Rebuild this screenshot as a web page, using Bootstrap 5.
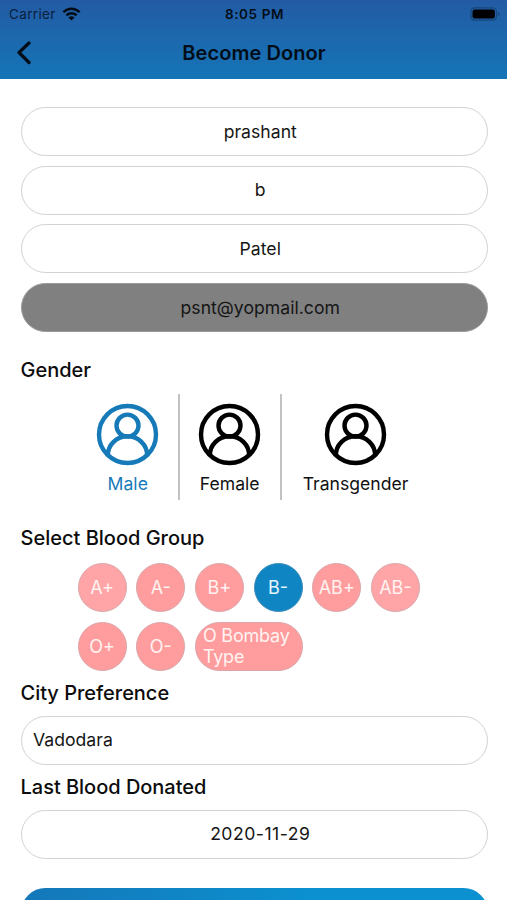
<!DOCTYPE html>
<html lang="en">
<head>
<meta charset="utf-8">
<meta name="viewport" content="width=device-width, initial-scale=1">
<title>Become Donor</title>
<link rel="stylesheet" href="https://cdn.jsdelivr.net/npm/bootstrap@5.3.0/dist/css/bootstrap.min.css">
<style>
  body { font-family: Inter, "Liberation Sans", sans-serif; color: #111; height: 900px; overflow: hidden; background: #fff; }
  .app-header { height: 79px; background: linear-gradient(#235ba4, #1575b7); color: #030d18; }
  .status-bar { height: 27px; font-size: 13.5px; padding: 1px 7px 0 9px; }
  .status-side { flex: 1 1 0; }
  .carrier { letter-spacing: .35px; color: #08203d; }
  .clock { font-size: 13.5px; font-weight: 600; letter-spacing: .6px; }
  .wifi { margin-left: 6px; }
  .title-bar { height: 52px; padding: 0 17px; }
  .title-bar h1 { font-size: 20px; font-weight: 600; letter-spacing: .05px; padding-right: 13px; }
  .donor-form { padding: 28px 19.5px 0 20.5px; }
  .field { height: 49px; font-size: 17.6px; line-height: 1; border: 1.3px solid #d2d2d2; color: #151515; background: #fff; padding: 0 11.5px; letter-spacing: .03px; }
  .fields { gap: 9.7px; }
  .field-locked { background: #808080; border-color: #999; }
  .date { letter-spacing: .5px; }
  .section-title { font-size: 20px; font-weight: 500; line-height: 24px; margin: 0; color: #0c0c0c; }
  .title-spaced { margin-top: 26px; }
  .title-tight { margin-top: 10.500px; letter-spacing: -.02px; }
  .title-tight + .field { margin-top: 10.500px; }
  .gender-row { height: 106px; margin-top: 12px; padding-left: 56px; }
  .gender-option { font-size: 17.6px; line-height: 20px; padding-top: 9px; gap: 7.5px; }
  .gender-option svg { width: 63px; height: 63px; color: #000; }
  .gender-option + .gender-option { border-left: 2px solid #c2c2c2; }
  .gender-male { width: 101.5px; padding-left: 1px; }
  .gender-female { width: 101.5px; }
  .gender-trans { width: 150px; }
  .picked, .picked svg { color: #167ab9; }
  .blood-groups { margin-top: 13px; padding-left: 57px; gap: 9.7px; width: 405px; }
  .blood { width: 49px; height: 49px; border: 1px solid #d9a5a8; background: #ff9c9e; color: #fff3f1; font-size: 18px; line-height: 21.5px; }
  .blood-soft { background: #ffa5a7; }
  .blood-picked { background: #1085c4; border-color: #3a8ab8; color: #e4f5ff; }
  .blood-wide { width: 108px; padding-left: 7px; letter-spacing: -.2px; }
  .submit { height: 49px; margin-top: 29px; border: 0; background: linear-gradient(100deg, #1477b9, #0c90cf 60%); }
</style>
<script src="https://cdn.jsdelivr.net/npm/bootstrap@5.3.0/dist/js/bootstrap.bundle.min.js"></script>
</head>
<body>
<svg class="d-none">
  <symbol id="person" viewBox="0 0 63 63">
    <g fill="none" stroke="currentColor" stroke-width="4.4">
      <circle cx="31.5" cy="31.5" r="28.500"/>
      <circle cx="31.5" cy="22.6" r="11"/>
      <path d="M11.800 52.500A19.700 19.300 0 0 1 51.200 52.500"/>
    </g>
  </symbol>
</svg>
<header class="app-header">
  <div class="status-bar d-flex align-items-center">
    <div class="status-side d-flex align-items-center">
      <span class="carrier">Carrier</span>
      <svg class="wifi" width="19" height="14" viewBox="0 0 18 14" fill="none" stroke="currentColor" stroke-width="2.500"><path d="M.9 5.200C5.500 .6 12.500 .6 17.100 5.200M3.900 8.300C6.800 5.500 11.200 5.500 14.100 8.300"/><path d="M9 13.500 5.900 10.400Q9 7.900 12.100 10.400Z" fill="currentColor" stroke="none"/></svg>
    </div>
    <span class="clock">8:05 PM</span>
    <div class="status-side d-flex justify-content-end">
      <svg width="30" height="14" viewBox="0 0 30 14"><rect x=".9" y=".9" width="25.600" height="12.200" rx="3.800" fill="none" stroke="#17477c" stroke-width="1.200"/><rect x="2.500" y="2.500" width="22.400" height="9" rx="2.300" fill="#000"/><path d="M28 5v4q1.500-.6 1.500-2T28 5Z" fill="#17477c"/></svg>
    </div>
  </div>
  <div class="title-bar d-flex align-items-center">
    <svg width="14" height="24" viewBox="0 0 14 24" fill="none" stroke="currentColor" stroke-width="3.200" stroke-linecap="round" stroke-linejoin="round"><path d="M12 2 2 11.500 12 21.500"/></svg>
    <h1 class="flex-fill text-center m-0">Become Donor</h1>
  </div>
</header>
<main class="donor-form">
  <div class="fields d-flex flex-column">
    <div class="field rounded-pill d-flex align-items-center justify-content-center ps-4">prashant</div>
    <div class="field rounded-pill d-flex align-items-center justify-content-center ps-4">b</div>
    <div class="field rounded-pill d-flex align-items-center justify-content-center ps-4">Patel</div>
    <div class="field field-locked rounded-pill d-flex align-items-center justify-content-center ps-4">psnt@yopmail.com</div>
  </div>
  <h2 class="section-title title-spaced">Gender</h2>
  <div class="gender-row d-flex">
    <div class="gender-option gender-male picked d-flex flex-column align-items-center"><svg><use href="#person"/></svg>Male</div>
    <div class="gender-option gender-female d-flex flex-column align-items-center"><svg><use href="#person"/></svg>Female</div>
    <div class="gender-option gender-trans d-flex flex-column align-items-center"><svg><use href="#person"/></svg>Transgender</div>
  </div>
  <h2 class="section-title title-spaced">Select Blood Group</h2>
  <div class="blood-groups d-flex flex-wrap">
    <div class="blood blood-soft rounded-pill d-flex align-items-center justify-content-center">A+</div>
    <div class="blood rounded-pill d-flex align-items-center justify-content-center">A-</div>
    <div class="blood rounded-pill d-flex align-items-center justify-content-center">B+</div>
    <div class="blood blood-picked rounded-pill d-flex align-items-center justify-content-center">B-</div>
    <div class="blood rounded-pill d-flex align-items-center justify-content-center">AB+</div>
    <div class="blood blood-soft rounded-pill d-flex align-items-center justify-content-center">AB-</div>
    <div class="blood rounded-pill d-flex align-items-center justify-content-center">O+</div>
    <div class="blood rounded-pill d-flex align-items-center justify-content-center">O-</div>
    <div class="blood blood-wide rounded-pill d-flex align-items-center">O Bombay<br>Type</div>
  </div>
  <h2 class="section-title title-tight">City Preference</h2>
  <div class="field rounded-pill d-flex align-items-center">Vadodara</div>
  <h2 class="section-title title-tight">Last Blood Donated</h2>
  <div class="field date rounded-pill d-flex align-items-center justify-content-center ps-4">2020-11-29</div>
  <div class="submit rounded-pill"></div>
</main>
</body>
</html>
